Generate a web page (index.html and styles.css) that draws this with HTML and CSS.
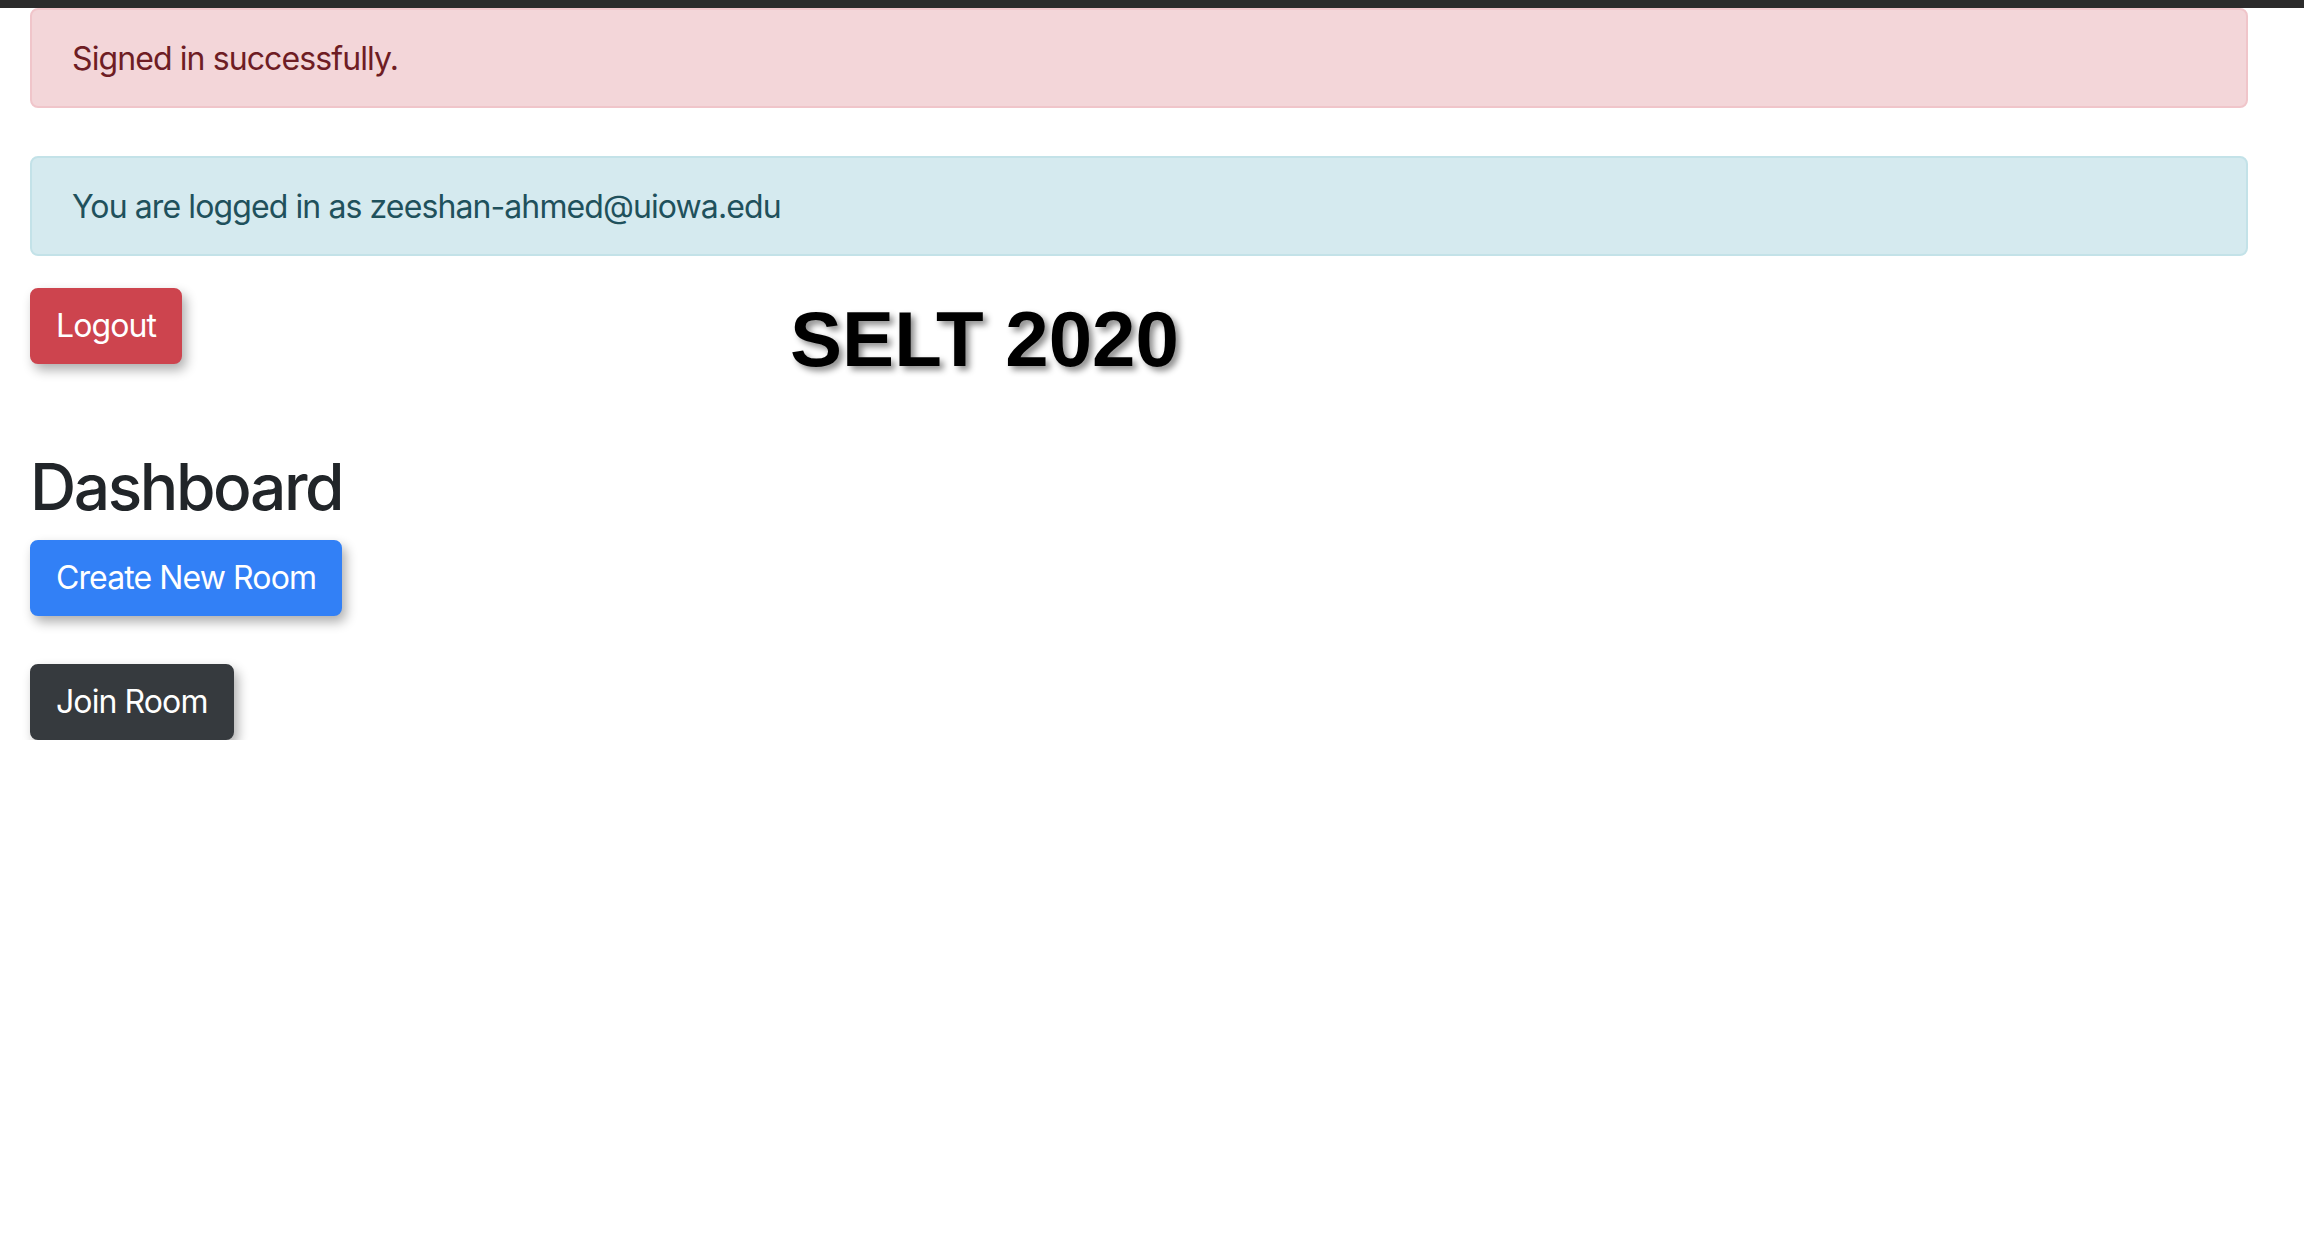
FILE: index.html
```html
<!DOCTYPE html>
<html lang="en">
<head>
<meta charset="utf-8">
<title>SELT 2020 - Dashboard</title>
<link rel="stylesheet" href="styles.css">
</head>
<body>
<div class="topbar"></div>
<main class="page">
  <div class="alert alert-danger">Signed in successfully.</div>
  <div class="alert alert-info">You are logged in as zeeshan-ahmed@uiowa.edu</div>
  <div class="header-row">
    <button class="btn btn-danger" type="button">Logout</button>
    <h1 class="title">SELT 2020</h1>
  </div>
  <h2 class="section-title">Dashboard</h2>
  <div class="actions">
    <button class="btn btn-primary" type="button">Create New Room</button>
    <button class="btn btn-dark" type="button">Join Room</button>
  </div>
</main>
</body>
</html>
```

FILE: styles.css
```css
html, body {
  margin: 0;
  padding: 0;
  background: #ffffff;
}

body {
  font-family: Inter, "Noto Sans", "Liberation Sans", sans-serif;
  font-size: 32px;
  line-height: 48px;
  letter-spacing: -0.9px;
  color: #212529;
}

.topbar {
  height: 8px;
  background: #2b2b2b;
}

.page {
  display: flex;
  flex-direction: column;
  align-items: stretch;
  padding: 0 56px 0 30px;
}

.alert {
  border: 2px solid transparent;
  border-radius: 8px;
  padding: 25px 40px 23px 40px;
  line-height: 48px;
  font-size: 32px;
}

.alert-danger {
  background: #f3d6d9;
  border-color: #f0c5ca;
  color: #6e1d24;
  margin-bottom: 48px;
}

.alert-info {
  background: #d5eaef;
  border-color: #c3e2e8;
  color: #1f515c;
  margin-bottom: 32px;
}

.header-row {
  display: flex;
  align-items: flex-start;
}

.title {
  margin: 12px 0 0 608px;
  font-family: "Liberation Sans", Arial, sans-serif;
  font-weight: 700;
  font-size: 78px;
  line-height: 78px;
  letter-spacing: 0;
  color: #000000;
  text-shadow: 4px 4px 6px rgba(0, 0, 0, 0.45);
}

.section-title {
  margin: 71px 0 14px 0;
  font-size: 64px;
  font-weight: 500;
  line-height: 76.8px;
  letter-spacing: -2.4px;
  color: #212529;
}

.actions {
  display: flex;
  flex-direction: column;
  align-items: flex-start;
  gap: 48px;
}

.btn {
  font-family: Inter, "Noto Sans", "Liberation Sans", sans-serif;
  font-size: 32px;
  line-height: 48px;
  font-weight: 400;
  letter-spacing: -0.9px;
  padding: 12px 24px;
  border: 2px solid transparent;
  border-radius: 8px;
  color: #ffffff;
  box-shadow: 4px 6px 12px rgba(0, 0, 0, 0.32);
  cursor: pointer;
}

.btn-danger {
  background: #cd444e;
  border-color: #cd444e;
}

.btn-primary {
  background: #3280f6;
  border-color: #3280f6;
}

.btn-dark {
  background: #363a3e;
  border-color: #363a3e;
}
```
